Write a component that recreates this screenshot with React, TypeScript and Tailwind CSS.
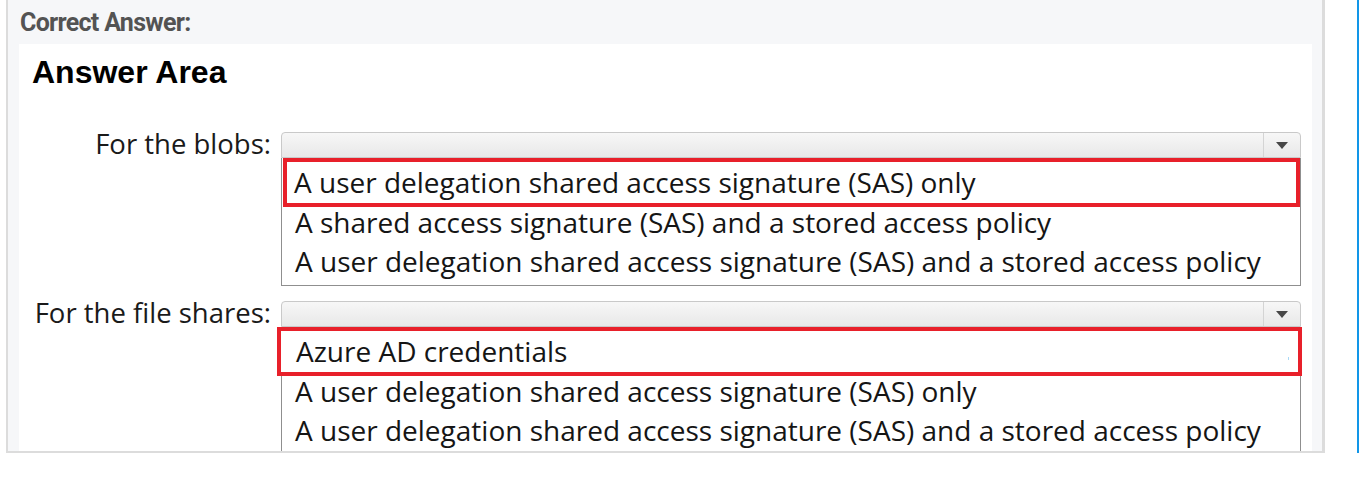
import React from "react";

const LIST_FONT = { fontFamily: '"Open Sans", "Noto Sans", sans-serif' };

function SelectBar() {
  return (
    <div className="flex h-[26px] rounded-t-[4px] border border-[#c9c9c9] bg-gradient-to-b from-[#f7f7f7] to-[#e8e8e8]">
      <div className="flex-1" />
      <div className="flex w-[37px] items-center justify-center border-l border-[#d4d4d4]">
        <svg width="12" height="7" viewBox="0 0 12 7">
          <path d="M0 0h12L6 7z" fill="#474747" />
        </svg>
      </div>
    </div>
  );
}

function Dropdown({ picked, rest, overflow }: { picked: string; rest: string[]; overflow?: boolean }) {
  return (
    <div className="w-[1020px]">
      <SelectBar />
      <div className="border-x border-b border-[#8f8f8f] text-[28px] text-[#151515]" style={LIST_FONT}>
        <div
          className={`relative h-[49px] border-4 border-[#e8202a] bg-white leading-[41px] ${
            overflow ? "-mr-[2px] -ml-[5px] pl-[15px]" : "ml-px pl-[7px]"
          }`}
        >
          {picked}
          {overflow && <span className="absolute top-[26px] right-[9px] h-[3px] w-px bg-[#a9d8f6]" />}
        </div>
        <div className="-mt-[4px] pb-[4px]">
          {rest.map((r) => (
            <div key={r} className="pl-[13px] leading-[39px]">
              {r}
            </div>
          ))}
        </div>
      </div>
    </div>
  );
}

function Row({ label, children, className = "" }: { label: string; children: React.ReactNode; className?: string }) {
  return (
    <div className={`flex gap-[10px] ${className}`}>
      <div className="w-[252px] pt-[2px] text-right text-[27.5px] leading-[20px] text-[#1a1a1a]" style={LIST_FONT}>
        {label}
      </div>
      {children}
    </div>
  );
}

export default function App() {
  return (
    <div className="flex h-[495px] w-[1371px] bg-white">
      <div className="ml-[6px] flex h-[453px] w-[1319px] flex-col overflow-hidden border-b-2 border-l-2 border-r-[3px] border-[#dcdcdc] bg-[#f6f7f9] pr-[10px] pl-[11px]">
        <div
          className="pt-[9px] pb-[7px] pl-px text-[25px] leading-[28px] font-bold tracking-[-0.7px] text-[#535353]"
          style={{ fontFamily: "Roboto, sans-serif" }}
        >
          Correct Answer:
        </div>
        <div className="flex-1 bg-white">
          <h2
            className="pt-[10px] pl-[13px] text-[32px] leading-[36px] font-bold text-black"
            style={{ fontFamily: '"Liberation Sans", Arial, sans-serif' }}
          >
            Answer Area
          </h2>
          <Row label="For the blobs:" className="mt-[42px]">
            <Dropdown
              picked="A user delegation shared access signature (SAS) only"
              rest={[
                "A shared access signature (SAS) and a stored access policy",
                "A user delegation shared access signature (SAS) and a stored access policy",
              ]}
            />
          </Row>
          <Row label="For the file shares:" className="mt-[15px]">
            <Dropdown
              overflow
              picked="Azure AD credentials"
              rest={[
                "A user delegation shared access signature (SAS) only",
                "A user delegation shared access signature (SAS) and a stored access policy",
              ]}
            />
          </Row>
        </div>
      </div>
      <div className="ml-[32px] h-[453px] w-[2px] bg-[#1296e8]" />
    </div>
  );
}
